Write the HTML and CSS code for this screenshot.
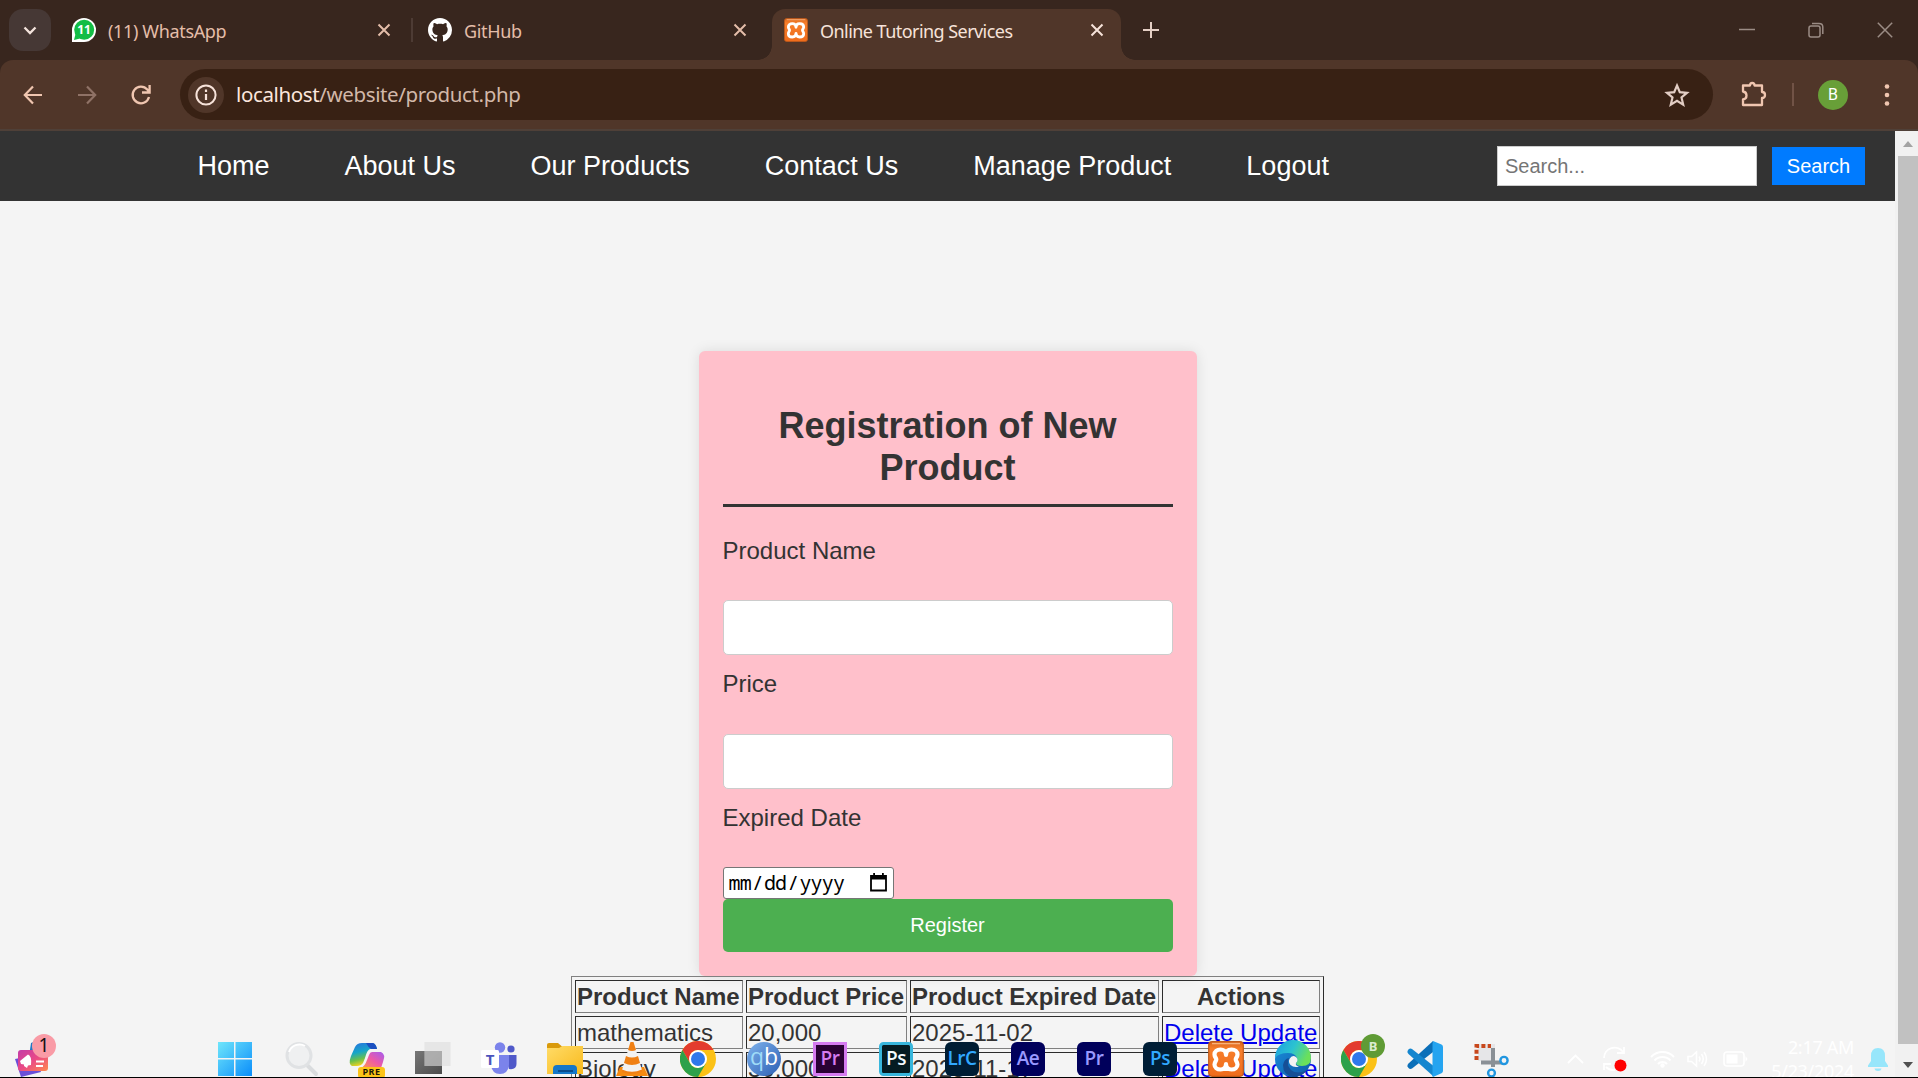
FILE: index.html
```html
<!DOCTYPE html>
<html lang="en">
<head>
<meta charset="utf-8">
<title>Online Tutoring Services</title>
<link rel="stylesheet" href="styles.css">
</head>
<body>
<svg class="defs" width="0" height="0">
  <defs>
    <linearGradient id="orange" x1="0" y1="0" x2="0" y2="1"><stop offset="0" stop-color="#d8651c"/><stop offset=".2" stop-color="#f77f2c"/><stop offset="1" stop-color="#ef6c1c"/></linearGradient>
    <linearGradient id="win" x1="0" y1="0" x2="1" y2="1"><stop offset="0" stop-color="#6fe6fb"/><stop offset="1" stop-color="#0a8dfa"/></linearGradient>
    <linearGradient id="copA" x1="0" y1="0" x2=".3" y2="1"><stop offset="0" stop-color="#2a6fe0"/><stop offset=".45" stop-color="#16a6c8"/><stop offset=".75" stop-color="#6cc04a"/><stop offset="1" stop-color="#f4d21f"/></linearGradient>
    <linearGradient id="copB" x1="1" y1="0" x2="0" y2="1"><stop offset="0" stop-color="#a45cf0"/><stop offset=".5" stop-color="#ee5aa5"/><stop offset="1" stop-color="#ff9a4a"/></linearGradient>
    <linearGradient id="tvA" x1="0" y1="0" x2="1" y2="1"><stop offset="0" stop-color="#777"/><stop offset="1" stop-color="#4c4c4c"/></linearGradient>
    <linearGradient id="fold" x1="0" y1="0" x2="1" y2="1"><stop offset="0" stop-color="#ffdc68"/><stop offset="1" stop-color="#f9b91b"/></linearGradient>
    <linearGradient id="qb" x1="0" y1="0" x2="1" y2="1"><stop offset="0" stop-color="#7eb2ec"/><stop offset="1" stop-color="#2c5fb4"/></linearGradient>
    <linearGradient id="edgeA" x1="0" y1="0" x2="1" y2=".4"><stop offset="0" stop-color="#1b9de2"/><stop offset=".55" stop-color="#2cc3d0"/><stop offset="1" stop-color="#6be05a"/></linearGradient>
    <linearGradient id="edgeB" x1="0" y1="0" x2="1" y2="1"><stop offset="0" stop-color="#1a8fdc"/><stop offset="1" stop-color="#0f5aa8"/></linearGradient>
    <linearGradient id="wid" x1="0" y1="0" x2="1" y2="1"><stop offset="0" stop-color="#c23ba8"/><stop offset=".5" stop-color="#ea4a86"/><stop offset="1" stop-color="#ff8a4c"/></linearGradient>
    <symbol id="xampp" viewBox="0 0 36 36" preserveAspectRatio="none">
      <rect x=".7" y=".7" width="34.6" height="34.6" rx="3.5" fill="url(#orange)" stroke="#c05a1a" stroke-width="1.2"/>
      <path d="M4 2.600H32" stroke="#f7b27c" stroke-width="1.400"/>
      <path d="M18 14C18 10 15.500 8.500 12.500 8.500C9 8.500 6.500 10.500 6.500 13.500C6.500 16 8.300 17 8.300 18.500C8.300 20 6.500 21 6.500 23.500C6.500 26.500 9 28.500 12.500 28.500C15.500 28.500 18 27 18 23C18 27 20.500 28.500 23.500 28.500C27 28.500 29.500 26.500 29.500 23.500C29.500 21 27.700 20 27.700 18.500C27.700 17 29.500 16 29.500 13.500C29.500 10.500 27 8.500 23.500 8.500C20.500 8.500 18 10 18 14Z" fill="none" stroke="#fff" stroke-width="4.200" stroke-linejoin="round"/>
    </symbol>
    <symbol id="chrome" viewBox="0 0 36 36">
      <circle cx="18" cy="18" r="18" fill="#fbc116"/>
      <path d="M2.400 9A18 18 0 0 1 33.600 9H18A9 9 0 0 0 10.200 13.500L9.400 21Z" fill="#e33b2e"/>
      <path d="M2.400 9A18 18 0 0 0 18 36L25.800 22.500L18 27A9 9 0 0 1 10.200 22.500Z" fill="#2da14a"/>
      <circle cx="18" cy="18" r="9" fill="#fff"/><circle cx="18" cy="18" r="7" fill="#2f78ea"/>
    </symbol>
    <symbol id="close" viewBox="0 0 14 14"><path d="M1.500 1.500L12.500 12.500M12.500 1.500L1.500 12.500" stroke="currentColor" stroke-width="2" fill="none"/></symbol>
  </defs>
</svg>

<header class="tabstrip">
  <button class="tab-search"><svg width="14" height="9" viewBox="0 0 14 9"><path d="M1.500 1.500L7 7L12.500 1.500" fill="none" stroke="#f3e3dc" stroke-width="2.300"/></svg></button>
  <div class="tab tab-whatsapp">
    <svg class="favicon" viewBox="0 0 24 24"><path d="M0 24V12A12 12 0 1 1 12 24Z" fill="#fff"/><circle cx="12.200" cy="11.800" r="10" fill="#12bd45"/><path d="M2 22L3.500 16L8 20.500Z" fill="#12bd45"/><text x="12" y="16.200" text-anchor="middle" class="fav-text">11</text></svg>
    <span class="tab-title">(11) WhatsApp</span>
    <svg class="tab-close"><use href="#close"/></svg>
  </div>
  <i class="tab-sep"></i>
  <div class="tab tab-github">
    <svg class="favicon" viewBox="0 0 16 16"><path fill="#fff" d="M8 0C3.580 0 0 3.580 0 8c0 3.540 2.290 6.530 5.470 7.590.4.070.55-.17.55-.38 0-.19-.01-.82-.01-1.490-2.010.37-2.530-.49-2.690-.94-.09-.23-.48-.94-.82-1.130-.28-.15-.68-.52-.01-.53.63-.01 1.080.58 1.230.82.72 1.210 1.870.87 2.330.66.07-.52.28-.87.51-1.070-1.780-.2-3.640-.89-3.640-3.950 0-.87.31-1.590.82-2.150-.08-.2-.36-1.020.08-2.120 0 0 .67-.21 2.200.82.64-.18 1.320-.27 2-.27s1.360.09 2 .27c1.530-1.040 2.200-.82 2.200-.82.44 1.100.16 1.920.08 2.120.51.56.82 1.270.82 2.150 0 3.070-1.870 3.750-3.650 3.950.29.25.54.73.54 1.480 0 1.070-.01 1.930-.01 2.200 0 .21.15.46.55.38A8.010 8.010 0 0 0 16 8c0-4.420-3.580-8-8-8z"/></svg>
    <span class="tab-title">GitHub</span>
    <svg class="tab-close"><use href="#close"/></svg>
  </div>
  <div class="tab tab-active">
    <svg class="favicon"><use href="#xampp"/></svg>
    <span class="tab-title">Online Tutoring Services</span>
    <svg class="tab-close"><use href="#close"/></svg>
  </div>
  <svg class="new-tab" width="16" height="16" viewBox="0 0 16 16"><path d="M8 0V16M0 8H16" stroke="#e5cfc5" stroke-width="2"/></svg>
  <div class="window-buttons">
    <svg width="16" height="16" viewBox="0 0 16 16"><path d="M0 7.500H16" stroke="#9b8c85" stroke-width="1.500"/></svg>
    <svg width="16" height="16" viewBox="0 0 16 16"><rect x="1" y="4" width="11" height="11" rx="2" fill="none" stroke="#9b8c85" stroke-width="1.500"/><path d="M4 1.500H11Q14.800 1.500 14.800 5V12" fill="none" stroke="#9b8c85" stroke-width="1.500"/></svg>
    <svg width="16" height="16" viewBox="0 0 16 16"><path d="M.8 .8L15.200 15.200M15.200 .8L.8 15.200" stroke="#9b8c85" stroke-width="1.500"/></svg>
  </div>
</header>

<div class="toolbar">
  <div class="nav-buttons">
    <svg width="20" height="20" viewBox="0 0 20 20"><path d="M19 10H2M10 1.500L1.800 10L10 18.500" fill="none" stroke="#f0c6b0" stroke-width="2.200"/></svg>
    <svg width="20" height="20" viewBox="0 0 20 20"><path d="M1 10H18M10 1.500L18.200 10L10 18.500" fill="none" stroke="#8f7266" stroke-width="2.200"/></svg>
    <svg width="20" height="20" viewBox="0 0 20 20"><path d="M18 12A8.300 8.300 0 1 1 16.300 4.600L18.300 7M18.600 0V7.500H11" fill="none" stroke="#f0c6b0" stroke-width="2.300"/></svg>
  </div>
  <div class="omnibox">
    <span class="site-info"><svg width="22" height="22" viewBox="0 0 22 22"><circle cx="11" cy="11" r="9.600" fill="none" stroke="#f7e3da" stroke-width="2"/><path d="M11 10V16M11 5.500V8" stroke="#f7e3da" stroke-width="2.200"/></svg></span>
    <span class="url"><b>localhost</b>/website/product.php</span>
    <svg class="star" width="24" height="24" viewBox="0 0 24 24"><path d="M12 2.500L14.800 9.200L22 9.800L16.500 14.500L18.200 21.600L12 17.800L5.800 21.600L7.500 14.500L2 9.800L9.200 9.200Z" fill="none" stroke="#e2cdc4" stroke-width="2.200"/></svg>
  </div>
  <svg class="puzzle" width="26" height="26" viewBox="0 0 26 26"><path d="M2 4.500H9Q9 2 11.200 2Q13.500 2 13.500 4.500H21V11Q24 11 24 14Q24 17 21 17V24H2V18.500Q5.500 18 5.500 14.500Q5.500 11 2 10.500Z" fill="none" stroke="#f0c6b0" stroke-width="2.300" stroke-linejoin="round"/></svg>
  <i class="tool-sep"></i>
  <span class="avatar">B</span>
  <svg class="kebab" width="6" height="22" viewBox="0 0 6 22"><g fill="#f0c6b0"><circle cx="3" cy="2.500" r="2.300"/><circle cx="3" cy="11" r="2.300"/><circle cx="3" cy="19.500" r="2.300"/></g></svg>
</div>

<div class="viewport">
  <div class="page">
    <nav class="navbar">
      <ul class="menu">
        <li>Home</li><li>About Us</li><li>Our Products</li><li>Contact Us</li><li>Manage Product</li><li>Logout</li>
      </ul>
      <form class="search"><input type="text" placeholder="Search..."><button type="button">Search</button></form>
    </nav>
    <main>
      <form class="card">
        <h2>Registration of New Product</h2>
        <label>Product Name</label>
        <input type="text">
        <label>Price</label>
        <input type="text">
        <label>Expired Date</label>
        <div class="date"><span>mm</span>/<span>dd</span>/<span>yyyy</span>
          <svg width="17" height="19" viewBox="0 0 17 19"><path d="M1 3H16V17.500H1Z" fill="none" stroke="#000" stroke-width="1.800"/><path d="M1 2.500H16V6.500H1ZM3.200 0H5V3H3.200ZM12 0H13.800V3H12Z" fill="#000"/></svg>
        </div>
        <button type="button" class="register">Register</button>
      </form>
      <table>
        <colgroup><col class="c-name"><col class="c-price"><col class="c-date"><col class="c-act"></colgroup>
        <tr><th>Product Name</th><th>Product Price</th><th>Product Expired Date</th><th>Actions</th></tr>
        <tr><td>mathematics</td><td>20,000</td><td>2025-11-02</td><td><a href="#">Delete</a><a href="#">&nbsp;Update</a></td></tr>
        <tr><td>Biology</td><td>30,000</td><td>2025-11-17</td><td><a href="#">Delete</a><a href="#">&nbsp;Update</a></td></tr>
      </table>
    </main>
  </div>
  <aside class="scrollbar">
    <i class="arrow-up"></i>
    <i class="thumb"></i>
    <i class="arrow-down"></i>
  </aside>
</div>

<footer class="taskbar">
  <svg class="widgets" width="42" height="44" viewBox="0 0 42 44">
    <path d="M16 9L24 6L30 22L14 22Z" fill="#2478c4"/>
    <path d="M0 25L20 21L26 38L6 43Z" fill="#6a4fd8"/>
    <rect x="3" y="16" width="30" height="21" rx="3" fill="url(#wid)"/>
    <path d="M5 27L13 20.500Q17 22 16 31L13 31.500L12 34L9 32V30.500L6 30Z" fill="#fff"/>
    <path d="M21 27.500H29M21 32H28" stroke="#fff" stroke-width="1.800"/>
    <circle cx="29" cy="12" r="12" fill="#f99ba6"/>
    <text x="29" y="18" text-anchor="middle" class="badge-text">1</text>
  </svg>
  <div class="apps">
    <svg class="app" viewBox="0 0 36 36"><path d="M1 1H17V17H1ZM18.500 1H35V17H18.500ZM1 18.500H17V35H1ZM18.500 18.500H35V35H18.500Z" fill="url(#win)"/></svg>
    <svg class="app" viewBox="0 0 36 36"><path d="M24 24L33 33" stroke="#dadcde" stroke-width="4" stroke-linecap="round"/><circle cx="16" cy="14.500" r="12" fill="#eff0f1" stroke="#e0e2e4" stroke-width="3"/><path d="M6 11A11 11 0 0 1 22 5" fill="none" stroke="#fff" stroke-width="2"/></svg>
    <svg class="app" viewBox="0 0 36 36"><path d="M13 2H24Q27 3 28 8H21Q18 9 16 17L14 22Q12 25 8 25H3Q-1 23 2 15L6 6Q8 2 13 2Z" fill="url(#copA)"/><path d="M17 2H24Q27 3 28 8H22Q19 6 17 2Z" fill="#1b4fc0"/><path d="M23 11H32Q37 13 34 21L32 27H12Q16 25 18 19L20 14Q21 11 23 11Z" fill="url(#copB)"/><rect x="9" y="26" width="27" height="11" rx="3" fill="#fcc419"/><text x="22.500" y="34" text-anchor="middle" class="pre-text">PRE</text></svg>
    <svg class="app" viewBox="0 0 36 36"><rect x="0" y="10" width="27" height="23" fill="url(#tvA)"/><rect x="9.500" y="1" width="26" height="24" fill="#e2e2e2" fill-opacity=".78"/><path d="M9.500 10H27V25H9.500Z" fill="#8e8e8e" fill-opacity=".45"/></svg>
    <svg class="app" viewBox="0 0 36 36"><circle cx="19" cy="6.500" r="5.200" fill="#7b83eb"/><circle cx="30" cy="8" r="3.600" fill="#5059c9"/><path d="M24 14H35.500V23Q35.500 29 28 28Z" fill="#5059c9"/><path d="M11 14H28V24Q27 33 19 33Q11 33 10 24Z" fill="#7b83eb"/><rect x="0" y="9" width="18" height="18" rx="1.500" fill="#fff"/><text x="9" y="23.500" text-anchor="middle" class="teams-text">T</text></svg>
    <svg class="app" viewBox="0 0 36 36"><path d="M0 3.500Q0 2 2 2H11L15 5.500V12H0Z" fill="#d99a0b"/><path d="M0 7H12L15.500 5H36V33H0Z" fill="url(#fold)"/><path d="M6 33V28Q6 24 10 24H26Q30 24 30 28V33Z" fill="#1577c9"/><path d="M11 30H26" stroke="#0b4c8c" stroke-width="2"/></svg>
    <svg class="app" viewBox="0 0 36 36"><path d="M6 26H30L34 35H2Z" fill="#f58a12"/><path d="M16.500 1H19.500L28 29Q18 34 8 29Z" fill="#f2f2f2"/><path d="M16.500 1H19.500L22 9Q18 11 14 9ZM12 15Q18 18 24 15L26 22Q18 26 10 22Z" fill="#f08014"/><path d="M8 28.500Q18 33 28 28.500V31Q18 35 8 31Z" fill="#f08014"/></svg>
    <svg class="app"><use href="#chrome"/></svg>
    <svg class="app" viewBox="0 0 36 36"><circle cx="18" cy="18" r="17" fill="url(#qb)"/><text x="18" y="23.500" text-anchor="middle" class="qb-text"><tspan fill="#9fdcf8">q</tspan><tspan fill="#fff">b</tspan></text></svg>
    <svg class="app" viewBox="0 0 36 36"><rect x="2.500" y="2.500" width="31" height="31" fill="#2a0134" stroke="#d57bf0" stroke-width="3"/><text x="18" y="23.500" text-anchor="middle" class="adobe" fill="#d57bf0">Pr</text></svg>
    <svg class="app" viewBox="0 0 36 36"><rect x="2.500" y="2.500" width="31" height="31" rx="3" fill="#051c22" stroke="#38b6dc" stroke-width="3"/><text x="18" y="23.500" text-anchor="middle" class="adobe" fill="#f3fbff">Ps</text></svg>
    <svg class="app" viewBox="0 0 36 36"><rect x="1" y="1" width="34" height="34" rx="6" fill="#001d34"/><text x="18" y="23.500" text-anchor="middle" class="adobe" fill="#31a8ff">LrC</text></svg>
    <svg class="app" viewBox="0 0 36 36"><rect x="1" y="1" width="34" height="34" rx="6" fill="#00005b"/><text x="18" y="23.500" text-anchor="middle" class="adobe" fill="#9999ff">Ae</text></svg>
    <svg class="app" viewBox="0 0 36 36"><rect x="1" y="1" width="34" height="34" rx="6" fill="#00005b"/><text x="18" y="23.500" text-anchor="middle" class="adobe" fill="#9999ff">Pr</text></svg>
    <svg class="app" viewBox="0 0 36 36"><rect x="1" y="1" width="34" height="34" rx="6" fill="#001e36"/><text x="18" y="23.500" text-anchor="middle" class="adobe" fill="#31a8ff">Ps</text></svg>
    <svg class="app"><use href="#xampp"/></svg>
    <svg class="app" viewBox="0 0 36 36"><circle cx="18" cy="18" r="18" fill="url(#edgeB)"/><path d="M0 17A18 18 0 0 1 36 17Q36 25 27 25Q21 25 21 22Q23 20 22 17Q20 12 13 12Q4 12 0 17Z" fill="url(#edgeA)"/><path d="M14 17Q11 24 16 29Q22 34 32 29Q27 36 18 36Q8 34 8 24Q9 18 14 17Z" fill="#164f96"/><path d="M14.500 18Q17 13.500 21 16Q24 19 21 22Q20 24.500 24 25.500Q19 27 15.500 24Q13 21 14.500 18Z" fill="#f3f3f3"/></svg>
    <svg class="app" viewBox="0 0 36 36"><use href="#chrome" width="36" height="36"/><circle cx="32" cy="5" r="12" fill="#5f9b35"/><text x="32" y="9.500" text-anchor="middle" class="b-text">B</text></svg>
    <svg class="app" viewBox="0 0 36 36"><path d="M26 0V11L5 27.500Q3 28.500 1.500 27L.5 25.500Q0 24 1.500 22.500Z" fill="#0b6fb8"/><path d="M26 35V24.500L5 8Q3 7 1.500 8.500L.5 10Q0 11.500 1.500 13Z" fill="#1486cf"/><path d="M26 0L34.500 3.500Q36 4.300 36 6V30Q36 31.500 34.500 32.300L26 36Q24.500 35 25.500 33V3Z" fill="#25a4f0"/></svg>
    <svg class="app" viewBox="0 0 36 36"><path d="M5 3H22V20H5Z" fill="#e6e6e8"/><path d="M3.500 19V5H18" fill="none" stroke="#c8481c" stroke-width="4" stroke-dasharray="4 2.300"/><path d="M20 7V26M8 21.500H29" stroke="#8a9096" stroke-width="4" fill="none"/><circle cx="31" cy="19.500" r="3.600" fill="#f3f3f3" stroke="#2196e0" stroke-width="2.400"/><circle cx="18.500" cy="32" r="3.400" fill="#f3f3f3" stroke="#2196e0" stroke-width="2.400"/></svg>
  </div>
  <div class="tray">
    <svg width="17" height="10" viewBox="0 0 17 10"><path d="M1 9L8.500 1.500L16 9" fill="none" stroke="#fff" stroke-width="1.800"/></svg>
    <svg class="sync" width="28" height="26" viewBox="0 0 28 26"><path d="M2 12A10.500 10.500 0 0 1 21 6M22 1V7H15M2 24V18H9M4 21A10.500 10.500 0 0 0 13 24" fill="none" stroke="#fff" stroke-width="1.800"/><circle cx="18.500" cy="19.500" r="6" fill="#f00"/></svg>
    <svg class="wifi" width="25" height="18" viewBox="0 0 25 18"><g fill="none" stroke="#fff" stroke-width="2"><path d="M1 7A16 16 0 0 1 24 7M4.500 10.500A11 11 0 0 1 20.500 10.500M8 14A6 6 0 0 1 17 14"/></g><circle cx="12.500" cy="15.500" r="2.200" fill="#fff"/></svg>
    <svg class="volume" width="21" height="18" viewBox="0 0 21 18"><path d="M1 6.500H4.500L9.500 2V16L4.500 11.500H1ZM12 6.500Q14 9 12 11.500M14.500 4Q18 9 14.500 14M17 2Q22 9 17 16" fill="none" stroke="#fff" stroke-width="1.500"/></svg>
    <svg class="battery" width="25" height="16" viewBox="0 0 25 16"><rect x="1" y="1" width="20" height="14" rx="3" fill="none" stroke="#fff" stroke-width="1.600"/><rect x="3.500" y="3.500" width="11" height="9" fill="#fff"/><path d="M22.500 5V11L24.500 8Z" fill="#fff"/></svg>
    <div class="clock"><span>2:17 AM</span><span>5/23/2024</span></div>
    <svg class="bell" width="20" height="23" viewBox="0 0 20 23"><path d="M10 0Q17 0 17 8V13L20 17.500V19H0V17.500L3 13V8Q3 0 10 0ZM6.500 20.500H13.500Q13 23 10 23Q7 23 6.500 20.500Z" fill="#97e6fb"/></svg>
  </div>
</footer>
</body>
</html>
```

FILE: styles.css
```css
* { box-sizing: border-box; }
body {
  margin: 0;
  height: 1078px;
  overflow: hidden;
  display: flex;
  flex-direction: column;
  position: relative;
  background: #38261e;
  border-bottom: 1px solid #000;
  font-family: "Liberation Sans", Arial, sans-serif;
}
.defs { position: absolute; }
button { border: 0; padding: 0; font-family: inherit; }
svg { flex: none; overflow: visible; }

/* Tab strip */
.tabstrip {
  flex: none;
  height: 60px;
  display: flex;
  align-items: center;
  padding-left: 9px;
  font-family: "Noto Sans", sans-serif;
  color: #e4bda9;
}
.tab-search {
  width: 42px;
  height: 42px;
  border-radius: 14px;
  background: #463835;
  display: flex;
  align-items: center;
  justify-content: center;
}
.tab { display: flex; align-items: center; height: 42px; }
.tab-whatsapp { margin-left: 21px; width: 319px; }
.tab-github { margin-left: 15px; width: 319px; }
.tab-active {
  position: relative;
  align-self: flex-end;
  width: 349px;
  height: 51px;
  margin-left: 25px;
  padding: 0 17px 9px 12px;
  border-radius: 13px 13px 0 0;
  background: #503629;
  color: #f7e3da;
}
.tab-active::before,
.tab-active::after {
  content: "";
  position: absolute;
  bottom: 0;
  width: 14px;
  height: 14px;
}
.tab-active::before { left: -14px; background: radial-gradient(circle at 0 0, transparent 13.500px, #503629 14px); }
.tab-active::after { right: -14px; background: radial-gradient(circle at 100% 0, transparent 13.500px, #503629 14px); }
.favicon { width: 24px; height: 24px; }
.fav-text { font: bold 12px "Noto Sans", sans-serif; fill: #fff; }
.tab-title {
  flex: 1;
  margin: 1px 0 0 12px;
  font-size: 18px;
  letter-spacing: -0.350px;
  white-space: nowrap;
}
.tab-active .tab-title { letter-spacing: -0.550px; }
.tab-close { width: 14px; height: 14px; }
.tab-sep { width: 2px; height: 24px; margin-left: 20px; background: #4d3b34; }
.new-tab { margin-left: 22px; }
.window-buttons { margin-left: auto; display: flex; gap: 53px; padding-right: 25px; }

/* Toolbar */
.toolbar {
  flex: none;
  height: 71px;
  display: flex;
  align-items: center;
  padding: 0 28px 0 23px;
  background: #503629;
  border-bottom: 2px solid #4f4038;
  border-radius: 13px 13px 0 0;
}
.nav-buttons { display: flex; gap: 34px; width: 157px; }
.omnibox {
  width: 1533px;
  height: 51px;
  border-radius: 26px;
  background: #382114;
  display: flex;
  align-items: center;
  padding: 0 24px 0 8px;
}
.site-info {
  width: 36px;
  height: 36px;
  border-radius: 50%;
  background: #503629;
  display: flex;
  align-items: center;
  justify-content: center;
}
.url {
  flex: 1;
  margin: -2px 0 0 12px;
  font-family: "Noto Sans", sans-serif;
  font-size: 20.500px;
  color: #d2b8a9;
  letter-spacing: -0.370px;
}
.url b { font-weight: 400; color: #fbe6dc; }
.puzzle { margin: -2px 0 0 28px; }
.tool-sep { width: 2px; height: 23px; margin-left: 25px; background: #715346; }
.avatar {
  width: 30px;
  height: 30px;
  margin-left: 24px;
  border-radius: 50%;
  background: #689f38;
  color: #fff;
  font: 16px/30px Roboto, sans-serif;
  text-align: center;
}
.kebab { margin-left: auto; }

/* Web page */
.viewport { flex: 1; min-height: 0; display: flex; }
.page { width: 1895px; background: #f4f4f4; color: #333; overflow: hidden; }
.navbar {
  height: 70px;
  display: flex;
  align-items: center;
  justify-content: space-between;
  padding: 0 30px 0 197.500px;
  background: #333;
}
.menu {
  display: flex;
  gap: 75px;
  margin: 0;
  padding: 1px 0 0;
  list-style: none;
  color: #fff;
  font-size: 27px;
}
.search { display: flex; align-items: center; gap: 15px; }
.search input {
  width: 260px;
  height: 40px;
  padding: 0 7px;
  border: 1px solid #ccc;
  font: 20px "Liberation Sans", Arial, sans-serif;
}
.search input::placeholder { color: #757575; }
.search button { width: 93px; height: 38px; background: #007bff; color: #fff; font-size: 20px; }
main { display: flex; flex-direction: column; align-items: center; padding-top: 150px; }
.card {
  flex: none;
  width: 498px;
  height: 625px;
  padding: 24px;
  border-radius: 6px;
  background: #ffc0cb;
  box-shadow: 0 0 13px rgba(0, 0, 0, .1);
}
h2 {
  margin: 30px 0 30px;
  padding-bottom: 15px;
  border-bottom: 3px solid #333;
  font-size: 36px;
  line-height: 42px;
  text-align: center;
}
label { display: block; margin-bottom: 36.300px; font-size: 24px; line-height: 27px; }
.card input {
  display: block;
  width: 450px;
  height: 55px;
  margin-bottom: 15.200px;
  border: 1px solid #ccc;
  border-radius: 5px;
}
.date {
  display: flex;
  align-items: center;
  width: 171px;
  height: 32px;
  padding: 0 6px 0 4px;
  border: 1px solid #767676;
  border-radius: 3px;
  background: #fff;
  color: #000;
  font: 20px/28px "Noto Sans Mono", "Liberation Mono", monospace;
  letter-spacing: -0.850px;
}
.date span { padding: 0 1px; }
.date svg { margin: -2px 0 0 auto; }
.register {
  display: block;
  width: 450px;
  height: 53px;
  border-radius: 5px;
  background: #4caf50;
  color: #fff;
  font-size: 20px;
}
table {
  width: 753px;
  table-layout: fixed;
  border: 1px solid;
  border-color: #808080 #2c2c2c #2c2c2c #808080;
  border-spacing: 3px;
  font-size: 24px;
  line-height: 27px;
}
.c-name { width: 168px; }
.c-price { width: 161px; }
.c-date { width: 249px; }
.c-act { width: 158px; }
th, td {
  height: 33px;
  padding: 2px 1px;
  border: 1px solid;
  border-color: #2c2c2c #808080 #808080 #2c2c2c;
  text-align: left;
  white-space: nowrap;
}
th:last-child { text-align: center; }
td a { color: #0000ee; text-decoration-thickness: 2px; }

/* Page scrollbar */
.scrollbar {
  flex: 1;
  display: flex;
  flex-direction: column;
  align-items: center;
  padding: 10px 0 9px 2px;
  background: #f1f1f1;
}
.arrow-up { border: 5px solid transparent; border-top: 0; border-bottom: 6px solid #a3a3a3; }
.thumb { width: 20px; height: 889px; margin-top: 9px; background: #c1c1c1; }
.arrow-down { margin-top: 18px; border: 5px solid transparent; border-bottom: 0; border-top: 6px solid #505050; }

/* Taskbar floating over the page */
.taskbar {
  position: absolute;
  left: 0;
  right: 0;
  bottom: 0;
  height: 50px;
  display: flex;
  align-items: flex-start;
  overflow: hidden;
  padding-left: 15px;
  font-family: "Noto Sans", sans-serif;
}
.widgets { margin-top: 7px; }
.badge-text { font: 19px "Noto Sans", sans-serif; fill: #111; }
.apps { display: flex; gap: 30.100px; margin: 14px 0 0 160px; }
.app { width: 36px; height: 36px; }
.adobe { font: 600 19px "Open Sans", sans-serif; letter-spacing: -0.500px; }
.qb-text { font: 23px "Open Sans", sans-serif; }
.pre-text { font: bold 9px "Open Sans", sans-serif; fill: #1d1a05; letter-spacing: .5px; }
.teams-text { font: bold 15px "Open Sans", sans-serif; fill: #4b53bc; }
.b-text { font: bold 13px "Noto Sans", sans-serif; fill: #dcebcf; }
.tray { display: flex; align-items: center; height: 34px; margin: 15px 0 0 auto; padding-right: 30px; }
.sync { margin-left: 18px; }
.wifi { margin-left: 20px; }
.volume { margin-left: 12px; }
.battery { margin-left: 15px; }
.clock {
  width: 106px;
  display: flex;
  flex-direction: column;
  align-items: flex-end;
  color: #fff;
  font-size: 18px;
  line-height: 24px;
  letter-spacing: -0.300px;
}
.bell { margin-left: 14px; }
```
